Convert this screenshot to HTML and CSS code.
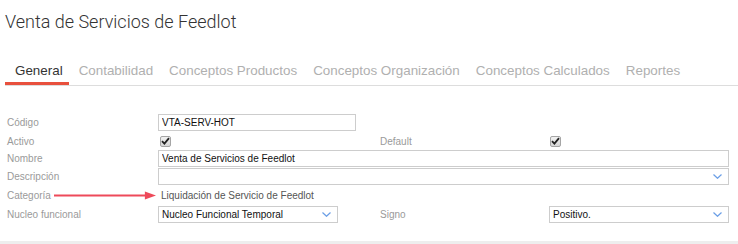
FILE: index.html
```html
<!DOCTYPE html>
<html lang="es">
<head>
    <meta charset="UTF-8">
    <title>Venta de Servicios de Feedlot</title>
    <link rel="stylesheet" href="styles.css">
</head>
<body>
    <h1 class="page-title">Venta de Servicios de Feedlot</h1>

    <ul class="tabs">
        <li class="tab active">General</li>
        <li class="tab">Contabilidad</li>
        <li class="tab">Conceptos Productos</li>
        <li class="tab">Conceptos Organización</li>
        <li class="tab">Conceptos Calculados</li>
        <li class="tab">Reportes</li>
    </ul>

    <div class="form-grid">
        <label class="field-label">Código</label>
        <div class="field"><input class="text-input code-input" type="text" value="VTA-SERV-HOT"></div>

        <label class="field-label">Activo</label>
        <div class="field"><span class="check"><svg width="9" height="8" viewBox="0 0 9 8"><path d="M1 4.2 L3.4 6.6 L8 1.2" fill="none" stroke="#222" stroke-width="1.8"/></svg></span></div>
        <label class="field-label second">Default</label>
        <div class="field"><span class="check right"><svg width="9" height="8" viewBox="0 0 9 8"><path d="M1 4.2 L3.4 6.6 L8 1.2" fill="none" stroke="#222" stroke-width="1.8"/></svg></span></div>

        <label class="field-label">Nombre</label>
        <div class="field wide"><input class="text-input" type="text" value="Venta de Servicios de Feedlot"></div>

        <label class="field-label">Descripción</label>
        <div class="field wide">
            <div class="select"><span></span><svg class="chevron" width="9" height="5" viewBox="0 0 9 5"><path d="M0.5 0.5 L4.5 4.3 L8.5 0.5" fill="none" stroke="#6b9fe6" stroke-width="1.2"/></svg></div>
        </div>

        <label class="field-label with-arrow">Categoría<svg class="arrow" height="9" viewBox="0 0 100 9" preserveAspectRatio="none"><path d="M0 4.5 H90" stroke="#ee4a5a" stroke-width="2"/><path d="M89 0.5 L100 4.5 L89 8.5 Z" fill="#ee4a5a"/></svg></label>
        <div class="field wide"><span class="plain-value">Liquidación de Servicio de Feedlot</span></div>

        <label class="field-label">Nucleo funcional</label>
        <div class="field">
            <div class="select short"><span>Nucleo Funcional Temporal</span><svg class="chevron" width="9" height="5" viewBox="0 0 9 5"><path d="M0.5 0.5 L4.5 4.3 L8.5 0.5" fill="none" stroke="#6b9fe6" stroke-width="1.2"/></svg></div>
        </div>
        <label class="field-label second">Signo</label>
        <div class="field">
            <div class="select short"><span>Positivo.</span><svg class="chevron" width="9" height="5" viewBox="0 0 9 5"><path d="M0.5 0.5 L4.5 4.3 L8.5 0.5" fill="none" stroke="#6b9fe6" stroke-width="1.2"/></svg></div>
        </div>
    </div>

    <div class="footer-bar"></div>
</body>
</html>
```

FILE: styles.css
```css
html,body{
    margin: 0;
    background-color: #fff;
}
body{
    font-family: "Liberation Sans", Arial, sans-serif;
    color: #222;
}
.page-title{
    margin: 0;
    padding: 10px 0 0 5px;
    font-family: Roboto, "Liberation Sans", sans-serif;
    font-size: 18px;
    font-weight: 300;
    line-height: 24px;
    color: #333;
}

/* tabs */
.tabs{
    display: flex;
    margin: 29px 0 0 5px;
    padding: 0;
    list-style: none;
    border-bottom: 1px solid #ddd;
}
.tab{
    padding: 0 6px 3px 10px;
    font-size: 13.4px;
    line-height: 16px;
    color: #b0b0b0;
    border-bottom: 3px solid transparent;
}
.tab.active{
    color: #333;
    border-bottom-color: #e8503d;
}

/* form */
.form-grid{
    display: grid;
    grid-template-columns: 151px 222px 169px 180px;
    grid-template-rows: 19px 18px 17px 19px 19px 19px;
    align-items: center;
    margin: 27px 0 0 7px;
    font-size: 10px;
}
.field-label{
    grid-column: 1;
    color: #9a9a9a;
}
.field-label.second{
    grid-column: 3;
}
.field{
    display: flex;
    align-items: center;
}
.field.wide{
    grid-column: 2 / 5;
}
.with-arrow{
    display: flex;
    align-items: center;
}
.arrow{
    flex: 1;
    margin: 0 2px 0 3px;
}
.text-input{
    box-sizing: border-box;
    width: 100%;
    height: 17px;
    margin: 0;
    padding: 0 3px;
    border: 1px solid #cdcdcd;
    font-family: "Liberation Sans", Arial, sans-serif;
    font-size: 10px;
    color: #111;
    background-color: #fff;
    outline: none;
}
.code-input{
    width: 198px;
}
.check{
    box-sizing: border-box;
    display: flex;
    align-items: center;
    justify-content: center;
    width: 11px;
    height: 11px;
    margin-left: 2px;
    border: 1px solid #a5a5a5;
    border-radius: 2px;
    background-image: linear-gradient(#f2f2f2,#d6d6d6);
}
.check.right{
    margin-left: 1px;
}
.select{
    box-sizing: border-box;
    display: flex;
    align-items: center;
    justify-content: space-between;
    width: 100%;
    height: 17px;
    padding: 0 6px 0 3px;
    border: 1px solid #cdcdcd;
    color: #111;
    background-color: #fff;
}
.select.short{
    width: 180px;
}
.chevron{
    flex-shrink: 0;
}
.plain-value{
    padding-left: 3px;
    color: #555;
}
.footer-bar{
    height: 3px;
    margin-top: 17px;
    background-color: #eee;
}
```
